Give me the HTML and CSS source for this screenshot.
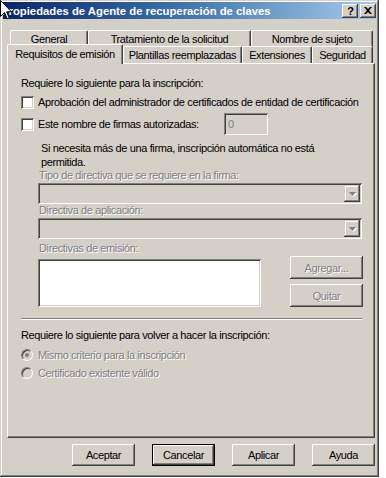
FILE: index.html
```html
<!DOCTYPE html>
<html lang="es">
<head>
<meta charset="utf-8">
<title>Propiedades de Agente de recuperación de claves</title>
<link rel="stylesheet" href="styles.css">
</head>
<body>
<div class="window">
  <div class="titlebar">
    <span class="title">Propiedades de Agente de recuperación de claves</span>
    <div class="tbtns">
      <span class="tbtn help">?</span>
      <span class="tbtn close"><svg width="8" height="7" viewBox="0 0 8 7"><path d="M0 0h2l2 2 2-2h2L5 3.5 8 7H6L4 5 2 7H0l3-3.5z" fill="#000"/></svg></span>
    </div>
  </div>

  <div class="tabs">
    <div class="tabrow back">
      <div class="tab t-general">General</div>
      <div class="tab t-trat">Tratamiento de la solicitud</div>
      <div class="tab t-nombre">Nombre de sujeto</div>
    </div>
    <div class="tabrow front">
      <div class="tab selected t-req">Requisitos de emisión</div>
      <div class="tab t-plant">Plantillas reemplazadas</div>
      <div class="tab t-ext">Extensiones</div>
      <div class="tab t-seg">Seguridad</div>
    </div>
  </div>

  <div class="panel">
    <div class="line h-first">Requiere lo siguiente para la inscripción:</div>
    <div class="check-row cb1"><span class="checkbox"></span><span>Aprobación del administrador de certificados de entidad de certificación</span></div>
    <div class="check-row cb2">
      <span class="checkbox"></span><span class="cb2-label">Este nombre de firmas autorizadas:</span>
      <span class="field num">0</span>
    </div>
    <div class="note">Si necesita más de una firma, inscripción automática no está<br>permitida.</div>
    <div class="dlabel l1">Tipo de directiva que se requiere en la firma:</div>
    <div class="combo c1"><span class="combo-btn"><svg width="7" height="4" viewBox="0 0 7 4"><path d="M0 0h7L3.5 4z" fill="#808080"/></svg></span></div>
    <div class="dlabel l2">Directiva de aplicación:</div>
    <div class="combo c2"><span class="combo-btn"><svg width="7" height="4" viewBox="0 0 7 4"><path d="M0 0h7L3.5 4z" fill="#808080"/></svg></span></div>
    <div class="dlabel l3">Directivas de emisión:</div>
    <div class="list-area">
      <div class="listbox"></div>
      <div class="side-btns">
        <span class="btn disabled">Agregar...</span>
        <span class="btn disabled">Quitar</span>
      </div>
    </div>
    <div class="separator"></div>
    <div class="line h-second">Requiere lo siguiente para volver a hacer la inscripción:</div>
    <div class="radio-row r1"><span class="radio checked"></span><span class="dis">Mismo criterio para la inscripción</span></div>
    <div class="radio-row r2"><span class="radio"></span><span class="dis">Certificado existente válido</span></div>
  </div>

  <div class="actions">
    <span class="btn">Aceptar</span>
    <span class="btn default">Cancelar</span>
    <span class="btn">Aplicar</span>
    <span class="btn">Ayuda</span>
  </div>

  <svg class="cursor" width="12" height="20" viewBox="0 0 12 20"><path d="M0.5 0.5V16.5L4.5 12.5L7.2 18.8L9.3 17.9L6.7 11.8H11.5Z" fill="#fff" stroke="#000" stroke-width="1"/></svg>
</div>
</body>
</html>
```
FILE: styles.css
```css
* { box-sizing: border-box; }
html, body { margin: 0; padding: 0; background: #fff; }
body {
  font-family: "Liberation Sans", Arial, sans-serif;
  font-size: 11px;
  letter-spacing: -0.38px;
  color: #000;
}
.window {
  position: relative;
  width: 379px;
  height: 477px;
  background: #d4d0c8;
  padding: 3px;
  box-shadow: inset -1px -1px #404040, inset 1px 1px #d4d0c8, inset -2px -2px #808080, inset 2px 2px #fff;
  overflow: hidden;
}
.titlebar {
  height: 17px;
  margin-top: -1px;
  background: linear-gradient(90deg, #0a246a 0%, #3a6ea5 45%, #a6caf0 100%);
  display: flex;
  align-items: center;
  justify-content: space-between;
  color: #fff;
}
.title {
  font-weight: bold;
  font-size: 11.3px;
  letter-spacing: 0;
  margin-left: -2px;
  white-space: nowrap;
}
.tbtns { display: flex; gap: 2px; }
.tbtn {
  width: 16px;
  height: 14px;
  background: #d4d0c8;
  box-shadow: inset -1px -1px #404040, inset 1px 1px #fff, inset -2px -2px #808080;
  color: #000;
  font-weight: bold;
  font-size: 11px;
  letter-spacing: 0;
  line-height: 14px;
  display: flex;
  align-items: center;
  justify-content: center;
}
.tbtn.help { padding-left: 1px; }

/* tabs */
.tabs { margin: 11px 0 0 4px; height: 33px; }
.tabrow { display: flex; }
.tabrow.back { height: 16px; margin-left: 3px; }
.tabrow.front { height: 17px; }
.tab {
  background: #d4d0c8;
  border-top: 1px solid #fff;
  border-left: 1px solid #fff;
  border-right: 1px solid #404040;
  box-shadow: inset -1px 0 #808080;
  border-radius: 2px 2px 0 0;
  text-align: center;
  white-space: nowrap;
  line-height: 14px;
  height: 17px;
  padding-top: 1px;
}
.tab.selected {
  position: relative;
  z-index: 2;
  height: 20px;
  margin-top: -2px;
  padding-top: 2px;
}
.t-general { width: 78px; }
.t-trat { width: 163px; }
.t-nombre { width: 122px; }
.t-req { width: 116px; }
.t-plant { width: 119px; }
.t-ext { width: 70px; }
.t-seg { width: 61px; }

/* panel */
.panel {
  margin-left: 4px;
  width: 368px;
  height: 375px;
  border-top: 1px solid #fff;
  border-left: 1px solid #fff;
  border-right: 1px solid #404040;
  border-bottom: 1px solid #404040;
  box-shadow: inset -1px -1px #808080;
  padding: 12px 0 0 13px;
}
.line { height: 14px; line-height: 14px; white-space: nowrap; }
.check-row { display: flex; align-items: center; height: 14px; white-space: nowrap; }
.checkbox {
  flex: none;
  width: 13px;
  height: 13px;
  background: #fff;
  box-shadow: inset 1px 1px #808080, inset -1px -1px #fff, inset 2px 2px #404040, inset -2px -2px #d4d0c8;
  margin-right: 4px;
}
.cb1 { margin-top: 5px; }
.cb2 { margin-top: 4px; height: 22px; }
.cb2-label { width: 186px; }
.field {
  width: 44px;
  height: 22px;
  background: #d4d0c8;
  box-shadow: inset 1px 1px #808080, inset -1px -1px #fff, inset 2px 2px #404040, inset -2px -2px #d4d0c8;
  color: #808080;
  padding: 4px 0 0 4px;
  line-height: 14px;
}
.note { margin-top: 6px; padding-left: 20px; line-height: 14px; }
.dlabel {
  padding-left: 18px;
  height: 13px;
  line-height: 13px;
  color: #808080;
  text-shadow: 1px 1px #fff;
  white-space: nowrap;
}
.l3 { margin-top: 3px; }
.combo {
  margin-left: 17px;
  width: 324px;
  height: 21px;
  margin-top: 1px;
  background: #d4d0c8;
  box-shadow: inset 1px 1px #808080, inset -1px -1px #fff, inset 2px 2px #404040, inset -2px -2px #d4d0c8;
  display: flex;
  justify-content: flex-end;
  padding: 2px;
}
.combo-btn {
  width: 16px;
  height: 17px;
  background: #d4d0c8;
  box-shadow: inset -1px -1px #404040, inset 1px 1px #d4d0c8, inset -2px -2px #808080, inset 2px 2px #fff;
  display: flex;
  align-items: center;
  justify-content: center;
}
.combo-btn svg { filter: drop-shadow(1px 1px 0 #fff); }
.list-area { display: flex; margin-top: 1px; margin-left: 17px; }
.listbox {
  margin-top: 3px;
  width: 223px;
  height: 48px;
  background: #fff;
  box-shadow: inset 1px 1px #808080, inset -1px -1px #fff, inset 2px 2px #404040, inset -2px -2px #d4d0c8;
}
.side-btns { margin-left: 29px; display: flex; flex-direction: column; gap: 5px; }
.btn {
  display: flex;
  align-items: center;
  justify-content: center;
  width: 73px;
  height: 23px;
  background: #d4d0c8;
  box-shadow: inset -1px -1px #404040, inset 1px 1px #fff, inset -2px -2px #808080, inset 2px 2px #d4d0c8;
  white-space: nowrap;
}
.btn.disabled { color: #808080; text-shadow: 1px 1px #fff; }
.separator {
  margin-top: 11px;
  width: 341px;
  height: 2px;
  border-top: 1px solid #808080;
  border-bottom: 1px solid #fff;
}
.h-second { margin-top: 8px; }
.radio-row { display: flex; align-items: center; height: 14px; white-space: nowrap; }
.r1 { margin-top: 6px; }
.r2 { margin-top: 4px; }
.radio {
  flex: none;
  width: 12px;
  height: 12px;
  border-radius: 50%;
  background: #d4d0c8;
  border: 1px solid;
  border-color: #808080 #fff #fff #808080;
  box-shadow: inset 1px 1px #404040, inset -1px -1px #d4d0c8;
  margin-right: 5px;
  display: flex;
  align-items: center;
  justify-content: center;
}
.radio.checked::after {
  content: "";
  width: 4px;
  height: 4px;
  border-radius: 50%;
  background: #808080;
}
.dis { color: #808080; text-shadow: 1px 1px #fff; }

/* bottom buttons */
.actions {
  display: flex;
  justify-content: flex-end;
  gap: 17px;
  margin-top: 6px;
  width: 372px;
}
.actions .btn { width: 63px; height: 22px; }
.btn.default {
  box-shadow: inset 0 0 0 1px #000, inset -2px -2px #404040, inset 2px 2px #fff, inset -3px -3px #808080;
}
.cursor { position: absolute; left: 0; top: 0; }
```
